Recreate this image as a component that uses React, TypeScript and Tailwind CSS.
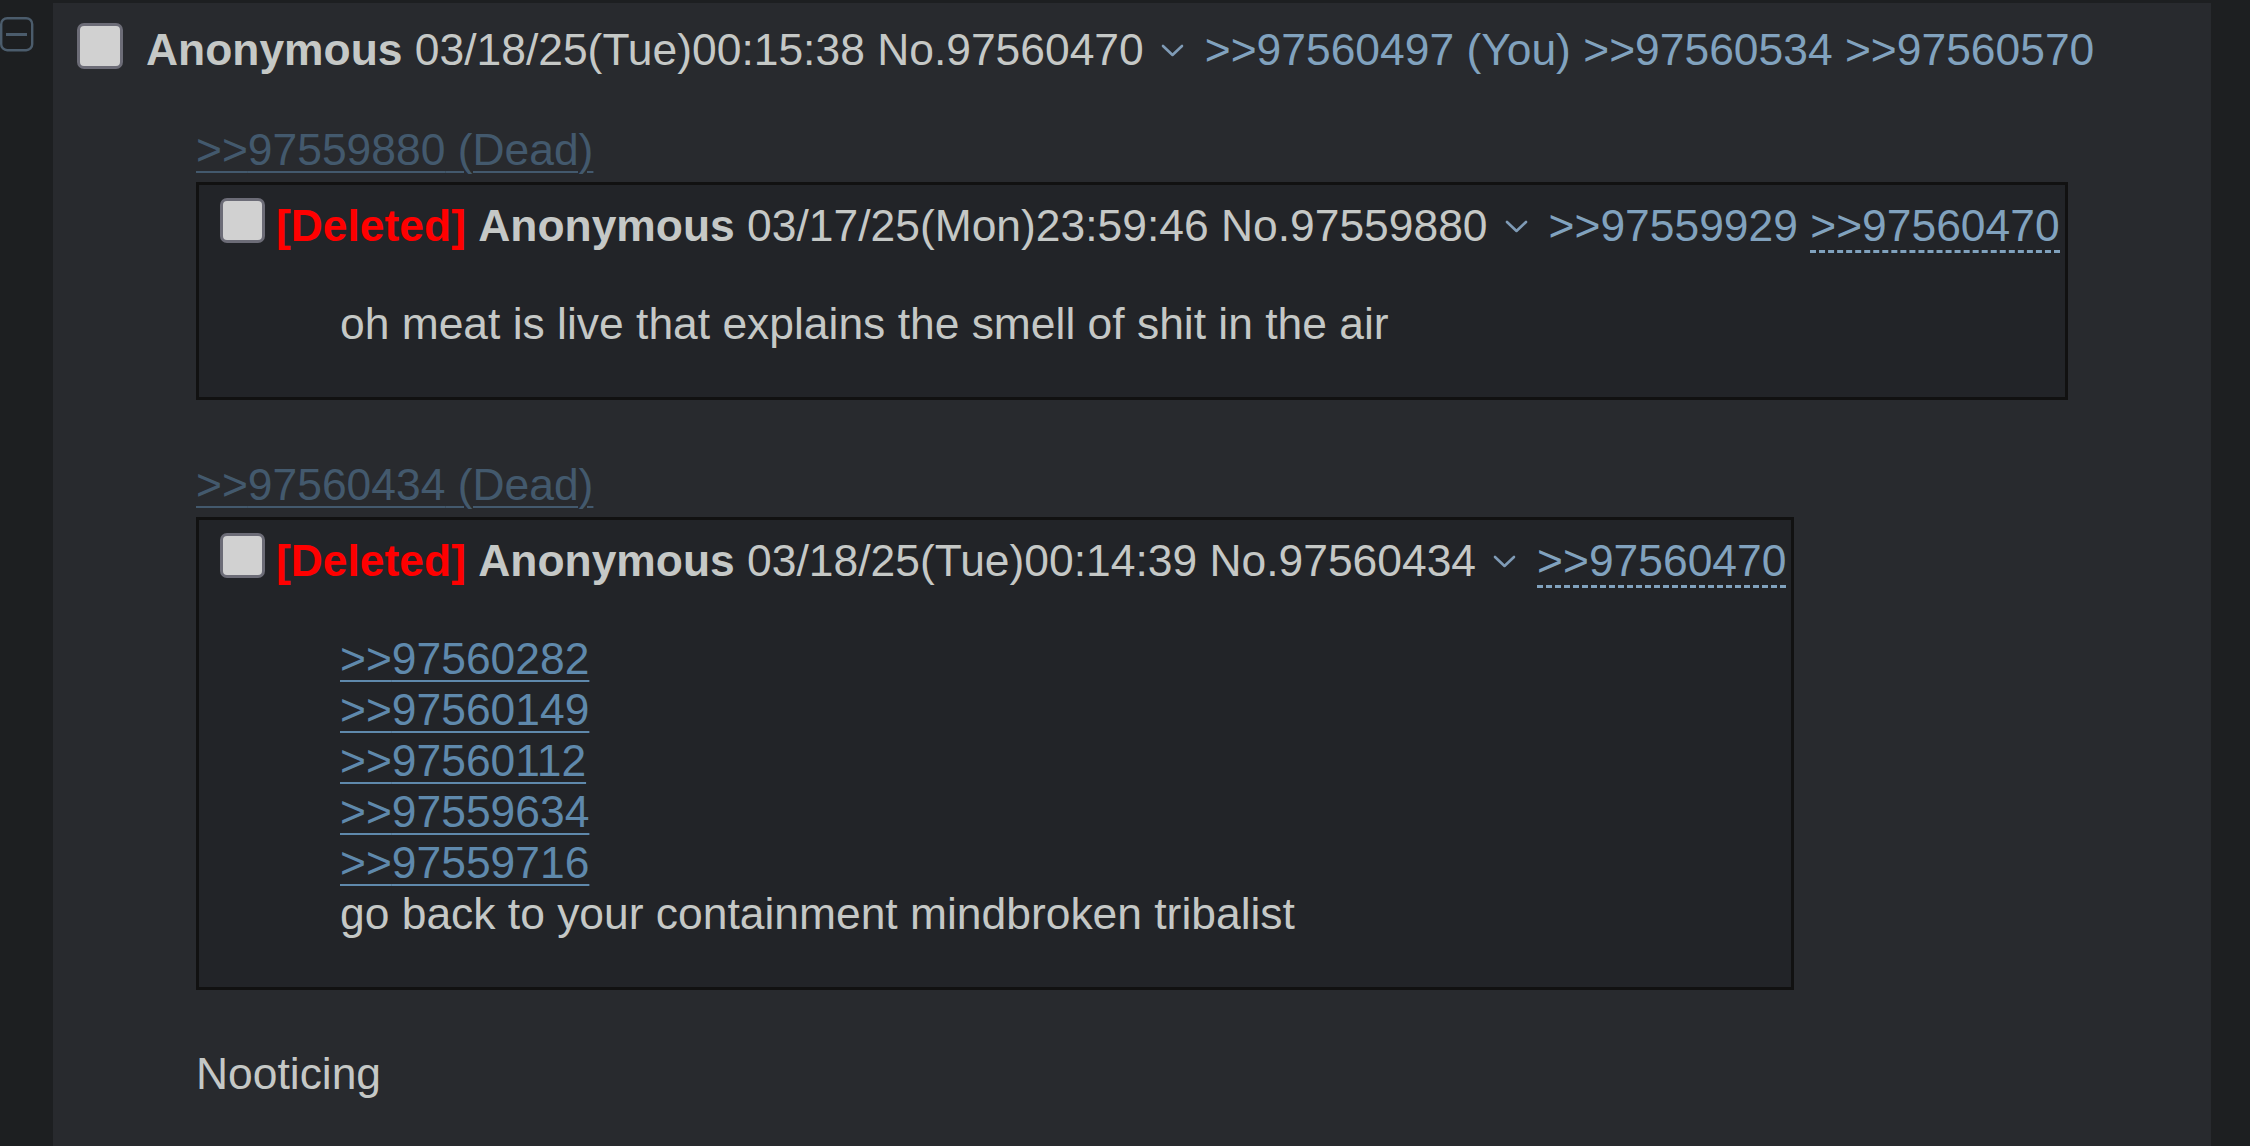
import React from 'react';

function Chevron() {
  return (
    <svg
      className="inline-block ml-[17px] mr-[21px] align-[8px]"
      width="23"
      height="13"
      viewBox="0 0 23 13"
      fill="none"
    >
      <polyline points="2,2 11.5,11 21,2" stroke="#7f9bb6" strokeWidth="2.6" strokeLinecap="round" strokeLinejoin="round" />
    </svg>
  );
}

function Check({ big }: { big?: boolean }) {
  return (
    <div
      className={
        big
          ? 'w-[46px] h-[46px] mt-[-1px] shrink-0 rounded-[7px] border-[3px] border-[#6c6c77] bg-[#d1d1d1]'
          : 'w-[45px] h-[45px] mt-[-2px] shrink-0 rounded-[7px] border-[3px] border-[#6c6c77] bg-[#d1d1d1]'
      }
    />
  );
}

function DeadLink({ id }: { id: string }) {
  return (
    <div className="h-[51px]">
      <span className="text-[#5f89ac] opacity-50 underline decoration-2 underline-offset-[6px]">
        &gt;&gt;{id} (Dead)
      </span>
    </div>
  );
}

function InlinePost({
  date,
  no,
  backlinks,
  children,
}: {
  date: string;
  no: string;
  backlinks: React.ReactNode;
  children: React.ReactNode;
}) {
  return (
    <div className="w-fit my-[7px] border-[3px] border-[#111111] bg-[#222428] pt-[15px] pb-[48px] pr-[5px]">
      <div className="flex items-start pl-[21px] h-[51px] whitespace-nowrap">
        <Check />
        <span className="ml-[11px]">
          <b className="text-[#ff0000]">[Deleted]</b> <b>Anonymous</b> {date} No.{no}
          <Chevron />
          {backlinks}
        </span>
      </div>
      <div className="pl-[141px] mt-[47px]">{children}</div>
    </div>
  );
}

export default function App() {
  return (
    <div className="h-[1146px] overflow-hidden bg-[#1d1f21] pt-[3px] flex font-['Liberation_Sans',Arial,sans-serif] text-[44.4px] leading-[51px] text-[#c5c8c6]">
      <div className="w-[53px] shrink-0">
        <svg className="mt-[14px]" width="34" height="35" viewBox="0 0 34 35" fill="none">
          <rect x="1.2" y="1.2" width="31" height="32" rx="6" stroke="#4b5c6c" strokeWidth="2.4" />
          <line x1="6" y1="17.5" x2="27" y2="17.5" stroke="#4b5c6c" strokeWidth="3" />
        </svg>
      </div>

      <div className="w-[2158px] shrink-0 bg-[#282a2e] pt-[21px]">
        <div className="flex items-start pl-[24px] h-[51px] whitespace-nowrap">
          <Check big />
          <span className="ml-[23px]">
            <b>Anonymous</b> 03/18/25(Tue)00:15:38 No.97560470
            <Chevron />
            <span className="text-[#81a2be]">&gt;&gt;97560497 (You) &gt;&gt;97560534 &gt;&gt;97560570</span>
          </span>
        </div>

        <div className="pl-[143px] mt-[49px]">
          <DeadLink id="97559880" />
          <InlinePost
            date="03/17/25(Mon)23:59:46"
            no="97559880"
            backlinks={
              <span className="text-[#81a2be]">
                &gt;&gt;97559929{' '}
                <span className="border-b-[3px] border-dashed border-[#81a2be]">&gt;&gt;97560470</span>
              </span>
            }
          >
            <div>oh meat is live that explains the smell of shit in the air</div>
          </InlinePost>
          <div className="h-[52px]" />

          <DeadLink id="97560434" />
          <InlinePost
            date="03/18/25(Tue)00:14:39"
            no="97560434"
            backlinks={
              <span className="text-[#81a2be] border-b-[3px] border-dashed border-[#81a2be]">&gt;&gt;97560470</span>
            }
          >
            {['97560282', '97560149', '97560112', '97559634', '97559716'].map((id) => (
              <div key={id}>
                <span className="text-[#5f89ac] underline decoration-2 underline-offset-[6px]">&gt;&gt;{id}</span>
              </div>
            ))}
            <div>go back to your containment mindbroken tribalist</div>
          </InlinePost>
          <div className="h-[51px]" />

          <div>Nooticing</div>
        </div>
      </div>
    </div>
  );
}
